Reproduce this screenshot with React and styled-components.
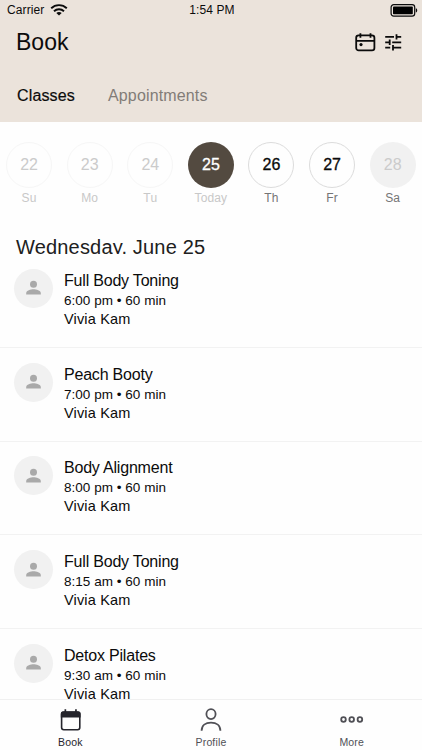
import React from 'react';
import styled, { createGlobalStyle } from 'styled-components';

const GlobalStyle = createGlobalStyle`
  * {
    box-sizing: border-box;
  }
  body {
    margin: 0;
    background: #fefefe;
    font-family: "Liberation Sans", Arial, sans-serif;
    color: #0b0b0b;
  }
`;

const Screen = styled.div`
  display: flex;
  flex-direction: column;
  width: 422px;
  height: 750px;
  overflow: hidden;
`;

const Header = styled.header`
  flex: none;
  height: 122px;
  background: #ebe3db;
`;

const StatusBar = styled.div`
  display: grid;
  grid-template-columns: 1fr auto 1fr;
  align-items: center;
  height: 20px;
  padding: 0 4px 0 6px;
  font-size: 12px;
  letter-spacing: 0.1px;
`;

const Carrier = styled.div`
  display: flex;
  align-items: center;
  gap: 6px;
  padding-left: 1px;
`;

const Battery = styled.svg`
  justify-self: end;
`;

const TitleBar = styled.div`
  display: flex;
  align-items: center;
  justify-content: space-between;
  height: 44px;
  padding: 0 20px 0 16px;
`;

const PageTitle = styled.h1`
  margin: 0;
  font-size: 23px;
  font-weight: normal;
  line-height: 26px;
`;

const Actions = styled.div`
  display: flex;
  align-items: center;
  gap: 9px;
`;

const Tabs = styled.nav`
  display: flex;
  gap: 33px;
  padding: 22px 17px 0 17px;
`;

const Tab = styled.span`
  font-size: 16px;
  line-height: 20px;
  letter-spacing: 0.15px;
  color: ${props => (props.$active ? '#0b0b0b' : '#827c77')};
  -webkit-text-stroke: ${props => (props.$active ? '0.2px' : '0')};
`;

const Week = styled.div`
  flex: none;
  display: grid;
  grid-template-columns: repeat(7, 60.6px);
  margin-left: -1.2px;
  padding-top: 20px;
  height: 114px;
`;

const Day = styled.div`
  display: flex;
  flex-direction: column;
  align-items: center;
`;

const circles = {
  past: 'border: 1px solid #f6f6f6; color: #cbcbcb;',
  today: 'background: #534a40; color: #fff; -webkit-text-stroke: 0.3px;',
  open: 'border: 1px solid #dcdcdc; color: #0b0b0b; -webkit-text-stroke: 0.3px;',
  closed: 'background: #f1f1f1; color: #cbcbcb;'
};

const Circle = styled.div`
  display: flex;
  align-items: center;
  justify-content: center;
  width: 46px;
  height: 46px;
  border-radius: 50%;
  font-size: 16px;
  ${props => circles[props.$kind]}
`;

const DayName = styled.span`
  margin-top: 2px;
  font-size: 12px;
  line-height: 16px;
  letter-spacing: 0.15px;
  color: ${props => (props.$dim ? '#c8c8c8' : '#757575')};
`;

// the first row starts right under the baseline and cuts the descenders
const DateTitle = styled.h2`
  flex: none;
  height: 18px;
  margin: 0;
  padding-left: 16px;
  overflow: hidden;
  font-size: 20px;
  font-weight: normal;
  line-height: 22px;
  letter-spacing: 0.18px;
  color: #202020;
`;

const ClassList = styled.div`
  flex: 1;
  min-height: 0;
  overflow: hidden;
`;

const Row = styled.div`
  display: flex;
  height: 93.75px;
  padding: 14.75px 14px 0;
  border-bottom: 1px solid #f2f2f2;
`;

const Avatar = styled.div`
  display: flex;
  align-items: center;
  justify-content: center;
  width: 39px;
  height: 39px;
  margin-right: 11px;
  border-radius: 50%;
  background: #f1f1f1;
`;

const ClassName = styled.div`
  margin-top: 2px;
  font-size: 16px;
  line-height: 20px;
  letter-spacing: -0.2px;
`;

const ClassTime = styled.div`
  font-size: 13.5px;
  line-height: 19px;
  letter-spacing: 0.03px;
`;

const Teacher = styled.div`
  font-size: 14.5px;
  line-height: 19px;
  letter-spacing: 0.16px;
`;

const BottomNav = styled.nav`
  flex: none;
  display: grid;
  grid-template-columns: repeat(3, 1fr);
  height: 51px;
  border-top: 1px solid #f0f0f0;
  background: #fefefe;
`;

const NavItem = styled.div`
  display: flex;
  flex-direction: column;
  align-items: center;
  padding-top: 8px;
  font-size: 10.5px;
  line-height: 14px;
  letter-spacing: 0.15px;
  color: ${props => (props.$active ? '#25252c' : '#505056')};
  svg {
    margin-bottom: 3px;
  }
`;

const WifiIcon = () => (
  <svg width="18" height="12" viewBox="0 0 18 12" fill="none" stroke="#0b0b0b" strokeWidth="1.9">
    <path d="M1.2 4.3C5.5.1 12.5.1 16.8 4.3" />
    <path d="M4 7.2c2.8-2.6 7.2-2.6 10 0" />
    <path d="M6.3 8.9c1.6-1.3 3.8-1.3 5.4 0L9 11.6z" fill="#0b0b0b" stroke="none" />
  </svg>
);

const BatteryIcon = () => (
  <Battery width="28" height="13" viewBox="0 0 28 13">
    <rect x="1.1" y="0.7" width="23.6" height="11.4" rx="2.6" fill="none" stroke="#0b0b0b" strokeWidth="1.2" />
    <rect x="3" y="2.6" width="19.8" height="7.6" rx="0.8" fill="#000" />
    <path d="M25.8 4.3c1.9.6 1.9 3.7 0 4.3z" fill="#0b0b0b" />
  </Battery>
);

const CalendarIcon = () => (
  <svg width="21" height="20" viewBox="0 0 21 20" fill="none" stroke="#0b0b0b" strokeWidth="1.8">
    <rect x="1.2" y="3.4" width="18.2" height="15" rx="2.4" />
    <path d="M1.2 8.8h18.2M5.4 1.2v4.5M15.5 1.2v4.5" />
    <circle cx="6" cy="12.6" r="1.6" fill="#0b0b0b" stroke="none" />
  </svg>
);

const FilterIcon = () => (
  <svg width="17" height="18" viewBox="0 0 17 18" fill="none" stroke="#0b0b0b" strokeWidth="1.8">
    <path d="M.2 3.9h8.8M11.5 3.9h4.7M11.5 1.2v5.4M.2 9.3h4.5M4.7 6.6V12M7.2 9.3h9M.2 14.7h5M8 12v5.4M8 14.7h8.2" />
  </svg>
);

const PersonIcon = () => (
  <svg width="16" height="16" viewBox="0 0 16 16" fill="#a9a9a9">
    <circle cx="7.5" cy="4.3" r="3.5" />
    <path d="M.2 14.6V13C.2 10.4 4.7 9.2 7.5 9.2s7.3 1.2 7.3 3.8v1.6z" />
  </svg>
);

const BookIcon = () => (
  <svg width="22" height="24" viewBox="0 0 22 24">
    <rect x="2.6" y="4.1" width="18.2" height="17.6" rx="2.2" fill="none" stroke="#25252c" strokeWidth="1.6" />
    <path d="M1.8 9.6V5.5a2 2 0 0 1 2-2h1.7V1.3h1.7v2.2h8.9V1.3h1.7v2.2h1.8a2 2 0 0 1 2 2v4.1z" fill="#25252c" />
  </svg>
);

const ProfileIcon = () => (
  <svg width="22" height="24" viewBox="0 0 22 24" fill="none" stroke="#505056" strokeWidth="1.8">
    <ellipse cx="11" cy="6.1" rx="4.6" ry="5" />
    <path d="M1.6 22.7c0-5.2 4-8 9.4-8s9.4 2.8 9.4 8" />
  </svg>
);

const MoreIcon = () => (
  <svg width="24" height="24" viewBox="0 0 24 24" fill="none" stroke="#505056" strokeWidth="1.8">
    <circle cx="3.5" cy="11.5" r="2.3" />
    <circle cx="11.7" cy="11.5" r="2.3" />
    <circle cx="19.9" cy="11.5" r="2.3" />
  </svg>
);

const days = [
  { date: 22, name: 'Su', kind: 'past' },
  { date: 23, name: 'Mo', kind: 'past' },
  { date: 24, name: 'Tu', kind: 'past' },
  { date: 25, name: 'Today', kind: 'today' },
  { date: 26, name: 'Th', kind: 'open' },
  { date: 27, name: 'Fr', kind: 'open' },
  { date: 28, name: 'Sa', kind: 'closed' }
];

const classes = [
  { name: 'Full Body Toning', time: '6:00 pm' },
  { name: 'Peach Booty', time: '7:00 pm' },
  { name: 'Body Alignment', time: '8:00 pm' },
  { name: 'Full Body Toning', time: '8:15 am' },
  { name: 'Detox Pilates', time: '9:30 am' }
];

const App = () => (
  <Screen>
    <GlobalStyle />
    <Header>
      <StatusBar>
        <Carrier>
          Carrier
          <WifiIcon />
        </Carrier>
        <span>1:54 PM</span>
        <BatteryIcon />
      </StatusBar>
      <TitleBar>
        <PageTitle>Book</PageTitle>
        <Actions>
          <CalendarIcon />
          <FilterIcon />
        </Actions>
      </TitleBar>
      <Tabs>
        <Tab $active>Classes</Tab>
        <Tab>Appointments</Tab>
      </Tabs>
    </Header>
    <Week>
      {days.map(day => (
        <Day key={day.date}>
          <Circle $kind={day.kind}>{day.date}</Circle>
          <DayName $dim={day.kind === 'past' || day.kind === 'today'}>{day.name}</DayName>
        </Day>
      ))}
    </Week>
    <DateTitle>Wednesday, June 25</DateTitle>
    <ClassList>
      {classes.map(item => (
        <Row key={item.time}>
          <Avatar>
            <PersonIcon />
          </Avatar>
          <div>
            <ClassName>{item.name}</ClassName>
            <ClassTime>{item.time} • 60 min</ClassTime>
            <Teacher>Vivia Kam</Teacher>
          </div>
        </Row>
      ))}
    </ClassList>
    <BottomNav>
      <NavItem $active>
        <BookIcon />
        Book
      </NavItem>
      <NavItem>
        <ProfileIcon />
        Profile
      </NavItem>
      <NavItem>
        <MoreIcon />
        More
      </NavItem>
    </BottomNav>
  </Screen>
);

export default App;
